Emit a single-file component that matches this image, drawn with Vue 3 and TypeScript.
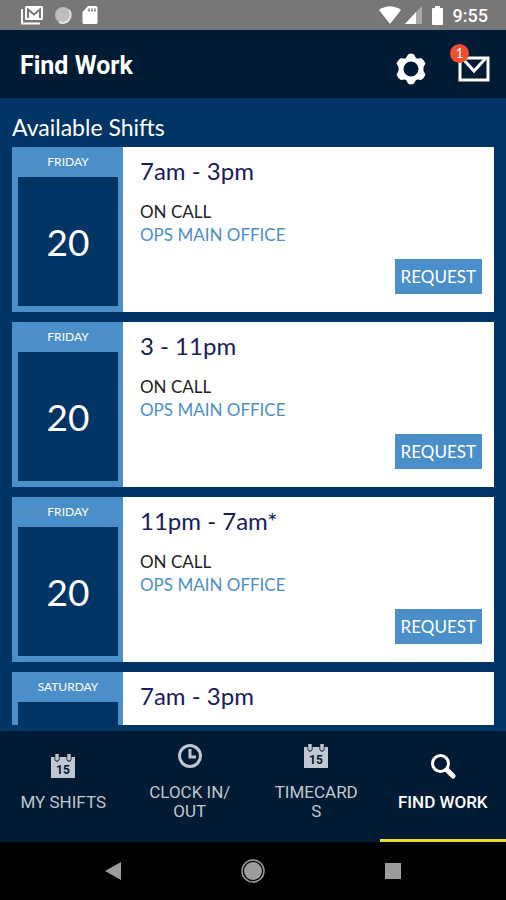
<script setup lang="ts">
import { ref } from 'vue'

interface Shift {
  id: number
  weekday: string
  day: number
  hours: string
  kind: string
  site: string
}

interface Tab {
  id: string
  label: string
  icon: 'calendar' | 'clock' | 'search'
}

const shifts: Shift[] = [
  { id: 1, weekday: 'FRIDAY', day: 20, hours: '7am - 3pm', kind: 'ON CALL', site: 'OPS MAIN OFFICE' },
  { id: 2, weekday: 'FRIDAY', day: 20, hours: '3 - 11pm', kind: 'ON CALL', site: 'OPS MAIN OFFICE' },
  { id: 3, weekday: 'FRIDAY', day: 20, hours: '11pm - 7am*', kind: 'ON CALL', site: 'OPS MAIN OFFICE' },
  { id: 4, weekday: 'SATURDAY', day: 21, hours: '7am - 3pm', kind: 'ON CALL', site: 'OPS MAIN OFFICE' },
]

const tabs: Tab[] = [
  { id: 'shifts', label: 'MY SHIFTS', icon: 'calendar' },
  { id: 'clock', label: 'CLOCK IN/ OUT', icon: 'clock' },
  { id: 'timecards', label: 'TIMECARDS', icon: 'calendar' },
  { id: 'find', label: 'FIND WORK', icon: 'search' },
]

const activeTab = ref('find')
const unread = ref(1)
</script>

<template>
  <div class="screen">
    <div class="status">
      <div class="status-group notices">
        <svg width="23" height="20" viewBox="0 0 23 20" aria-hidden="true">
          <path d="M1 4v14.500h18" fill="none" stroke="#fff" stroke-width="2" />
          <rect x="4" y="1" width="18" height="14" rx="1.500" fill="#fff" />
          <path d="M7 13V4.500l6 5 6-5V13" fill="none" stroke="#777" stroke-width="2" />
        </svg>
        <svg width="18" height="18" viewBox="0 0 18 18" aria-hidden="true">
          <circle cx="9" cy="9" r="8" fill="#bdbdbd" />
          <path d="M15 4a8 8 0 0 1-10 12" fill="none" stroke="#e4e4e4" stroke-width="2" />
        </svg>
        <svg width="16" height="20" viewBox="0 0 16 20" aria-hidden="true">
          <path d="M6 1h8q1.500 0 1.500 1.500v15q0 1.500-1.500 1.500H2Q.5 19 .5 17.500V7z" fill="#fff" />
          <path d="M7 3.500v3M10 3.500v3M13 3.500v3" stroke="#777" stroke-width="1.500" />
        </svg>
      </div>
      <div class="status-group">
        <svg width="22" height="18" viewBox="0 0 22 18" aria-hidden="true">
          <path d="M0 4Q11-3.500 22 4L11 18z" fill="#fff" />
        </svg>
        <svg width="17" height="18" viewBox="0 0 17 18" aria-hidden="true">
          <path d="M17 0v18H0z" fill="#a9a9a9" />
          <path d="M11 6v12H0z" fill="#fff" />
        </svg>
        <svg class="battery" width="11" height="19" viewBox="0 0 11 19" aria-hidden="true">
          <path d="M3 0h5v2h2q1 0 1 1v15q0 1-1 1H1q-1 0-1-1V3q0-1 1-1h2z" fill="#fff" />
        </svg>
        <span class="time">9:55</span>
      </div>
    </div>

    <header class="header">
      <h1>Find Work</h1>
      <div class="actions">
        <button type="button" class="icon-button" aria-label="Settings">
          <svg width="30" height="32" viewBox="0 0 30 32" aria-hidden="true">
            <path
              fill="#fff"
              fill-rule="evenodd"
              d="M12 1.500Q15-.5 18 1.500L20 5Q21.500 6 25 5Q28.500 7 29.500 10.500L27.500 14V18L29.500 21.500Q28.500 25 25 27Q21.500 26 20 27L18 30.500Q15 32.500 12 30.500L10 27Q8.500 26 5 27Q1.500 25 .5 21.500L2.500 18V14L.5 10.500Q1.500 7 5 5Q8.500 6 10 5ZM15 8.500a7.500 7.500 0 1 0 0 15a7.500 7.500 0 1 0 0-15z"
            />
          </svg>
        </button>
        <button type="button" class="icon-button mail" aria-label="Messages">
          <svg width="32" height="26" viewBox="0 0 32 26" aria-hidden="true">
            <rect x="2" y="2" width="28" height="22" fill="none" stroke="#fff" stroke-width="3" />
            <path d="M5 3l11 12L27 3" fill="none" stroke="#fff" stroke-width="3" />
          </svg>
          <span class="badge">{{ unread }}</span>
        </button>
      </div>
    </header>

    <main class="content">
      <h2>Available Shifts</h2>
      <ul class="list">
        <li v-for="shift in shifts" :key="shift.id" class="card">
          <div class="date">
            <span class="weekday">{{ shift.weekday }}</span>
            <span class="day">{{ shift.day }}</span>
          </div>
          <div class="details">
            <h3>{{ shift.hours }}</h3>
            <p>{{ shift.kind }}</p>
            <p class="site">{{ shift.site }}</p>
            <button type="button" class="request">REQUEST</button>
          </div>
        </li>
      </ul>
    </main>

    <nav class="tabs">
      <button
        v-for="tab in tabs"
        :key="tab.id"
        type="button"
        class="tab"
        :class="{ active: tab.id === activeTab }"
        @click="activeTab = tab.id"
      >
        <svg v-if="tab.icon === 'calendar'" width="26" height="26" viewBox="0 0 26 26" aria-hidden="true">
          <path d="M1 4h24v21H1z" fill="#c1c7cf" />
          <path d="M5 1v6q2 3 4 0V1M17 1v6q2 3 4 0V1" fill="#a3abb5" stroke="#001b33" stroke-width="1" />
          <path d="M7 1v6M19 1v6" stroke="#c1c7cf" stroke-width="3" />
          <text x="13" y="21" text-anchor="middle" class="glyph">15</text>
        </svg>
        <svg v-else-if="tab.icon === 'clock'" width="26" height="26" viewBox="0 0 26 26" aria-hidden="true">
          <circle cx="13" cy="13" r="10.500" fill="none" stroke="#c1c7cf" stroke-width="3" />
          <path d="M13 6v8h6" fill="none" stroke="#c1c7cf" stroke-width="3" />
        </svg>
        <svg v-else width="26" height="26" viewBox="0 0 26 26" aria-hidden="true">
          <circle cx="10.500" cy="10.500" r="8" fill="none" stroke="#fff" stroke-width="3" />
          <path d="M17 17l6 6" stroke="#fff" stroke-width="5" stroke-linecap="round" />
        </svg>
        <span class="label">{{ tab.label }}</span>
      </button>
    </nav>

    <div class="system">
      <button type="button" class="icon-button" aria-label="Back">
        <svg width="24" height="24" viewBox="0 0 24 24" aria-hidden="true">
          <path d="M4 12L20 3v18z" fill="#9c9c9c" />
        </svg>
      </button>
      <button type="button" class="icon-button" aria-label="Home">
        <svg width="24" height="24" viewBox="0 0 24 24" aria-hidden="true">
          <circle cx="12" cy="12" r="11" fill="none" stroke="#9c9c9c" stroke-width="1.500" />
          <circle cx="12" cy="12" r="9" fill="#9c9c9c" />
        </svg>
      </button>
      <button type="button" class="icon-button" aria-label="Recent apps">
        <svg width="24" height="24" viewBox="0 0 24 24" aria-hidden="true">
          <rect x="4" y="4" width="16" height="16" fill="#9c9c9c" />
        </svg>
      </button>
    </div>
  </div>
</template>

<style>
body {
  margin: 0;
  background: #003464;
}
</style>

<style scoped>
.screen {
  display: flex;
  flex-direction: column;
  height: 100vh;
  background: #003464;
  color: #fff;
  font-family: Lato, 'Liberation Sans', sans-serif;
}

h1,
h2,
h3,
p,
ul {
  margin: 0;
  padding: 0;
}

button {
  margin: 0;
  border: 0;
  font: inherit;
  color: inherit;
  cursor: pointer;
}

svg {
  display: block;
  flex: none;
}

.status {
  display: flex;
  flex: none;
  align-items: center;
  justify-content: space-between;
  height: 30px;
  padding: 0 18px 0 21px;
  background: #777;
}

.status-group {
  display: flex;
  align-items: center;
  gap: 4px;
}

.notices {
  gap: 10px;
}

.battery {
  margin: 0 6px;
}

.time {
  padding-top: 2px;
  font: 500 18px/20px Roboto, sans-serif;
}

.header {
  display: flex;
  flex: none;
  align-items: center;
  justify-content: space-between;
  box-sizing: border-box;
  height: 68px;
  padding: 4px 16px 0 20px;
  background: #001b33;
}

h1 {
  font: 700 25px/30px Roboto, sans-serif;
}

.actions {
  display: flex;
  align-items: center;
  gap: 32px;
  padding-top: 5px;
}

.icon-button {
  padding: 0;
  background: none;
}

.mail {
  position: relative;
}

.badge {
  position: absolute;
  top: -12px;
  left: -8px;
  width: 19px;
  height: 19px;
  border-radius: 50%;
  background: #f04e2e;
  font-size: 13px;
  line-height: 19px;
  text-align: center;
}

.content {
  display: flex;
  flex: 1;
  flex-direction: column;
  min-height: 0;
  padding: 13px 12px 6px;
}

h2 {
  font-size: 23px;
  font-weight: 400;
  line-height: 32px;
  padding-bottom: 4px;
}

.list {
  display: flex;
  flex: 1;
  flex-direction: column;
  gap: 10px;
  min-height: 0;
  overflow: hidden;
  list-style: none;
}

.card {
  display: flex;
  flex: none;
  height: 165px;
  background: #fff;
}

.date {
  display: flex;
  flex: none;
  flex-direction: column;
  box-sizing: border-box;
  width: 111px;
  padding: 0 5px 6px 6px;
  background: #4b8fca;
  text-align: center;
}

.weekday {
  font-size: 12px;
  line-height: 30px;
}

.day {
  display: flex;
  flex: 1;
  align-items: center;
  justify-content: center;
  background: #003464;
  font-size: 37px;
}

.details {
  display: flex;
  flex: 1;
  flex-direction: column;
  padding: 7px 12px 18px 17px;
}

h3 {
  padding-bottom: 12px;
  color: #1b1b5e;
  font-size: 24px;
  font-weight: 400;
  line-height: 34px;
}

p {
  color: #222;
  font-size: 17px;
  line-height: 23px;
}

.site {
  color: #4b8fca;
}

.request {
  align-self: flex-end;
  height: 35px;
  margin-top: auto;
  padding: 0 6px;
  background: #4b8fca;
  font-size: 17px;
}

.tabs {
  display: grid;
  flex: none;
  grid-template-columns: repeat(4, 1fr);
  height: 111px;
  background: #001b33;
}

.tab {
  display: flex;
  flex-direction: column;
  align-items: center;
  justify-content: center;
  gap: 14px;
  min-width: 0;
  padding: 0 18px 6px;
  border-bottom: 3px solid transparent;
  background: none;
  color: #c1c7cf;
  font: 400 17px/19px Roboto, sans-serif;
}

.label {
  max-width: 100%;
  overflow-wrap: anywhere;
}

.active {
  border-bottom-color: #e8dc2c;
  color: #fff;
  font-weight: 500;
}

.glyph {
  fill: #001b33;
  font: 700 12px Roboto, sans-serif;
}

.system {
  display: flex;
  flex: none;
  align-items: center;
  justify-content: space-around;
  height: 58px;
  padding: 0 43px;
  background: #000;
}
</style>
